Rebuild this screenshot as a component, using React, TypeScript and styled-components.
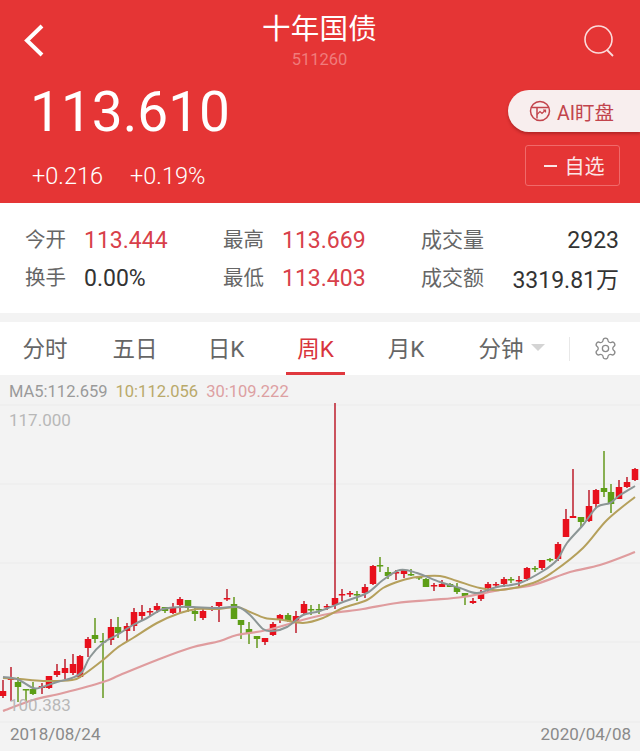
import React from "react";
import styled, { createGlobalStyle } from "styled-components";
import { Settings } from "lucide-react";

const GlobalStyle = createGlobalStyle`
  html, body {
    margin: 0;
    padding: 0;
    background: #f3f3f3;
  }
  * {
    box-sizing: border-box;
  }
`;

const FONT = `Roboto, "Noto Sans CJK SC", sans-serif`;

const Page = styled.div`
  width: 640px;
  height: 751px;
  overflow: hidden;
  display: flex;
  flex-direction: column;
  font-family: ${FONT};
  background: #f3f3f3;
`;

const Header = styled.header`
  height: 203px;
  background: #e53535;
  color: #fff;
  display: flex;
  flex-direction: column;
`;

const NavRow = styled.div`
  height: 80px;
  display: flex;
  align-items: flex-start;
  justify-content: space-between;
  padding: 24px 23px 0 22px;
`;

const TitleBlock = styled.div`
  display: flex;
  flex-direction: column;
  align-items: center;
  margin-top: -13px;
  margin-left: 12px;
`;

const Title = styled.div`
  font-size: 28.5px;
  line-height: 38px;
  letter-spacing: 0.3px;
`;

const Code = styled.div`
  font-size: 16.5px;
  line-height: 20px;
  color: #f07c7c;
  margin-top: 1px;
`;

const QuoteRow = styled.div`
  flex: 1;
  display: flex;
  justify-content: space-between;
`;

const QuoteLeft = styled.div`
  padding: 2px 0 0 30px;
`;

const Price = styled.div`
  font-size: 55px;
  line-height: 60px;
`;

const Changes = styled.div`
  display: flex;
  gap: 27px;
  margin-top: 21px;
  margin-left: 2px;
  font-size: 23.5px;
  line-height: 26px;
  font-weight: 300;
`;

const QuoteRight = styled.div`
  display: flex;
  flex-direction: column;
  align-items: flex-end;
  padding-top: 10px;
`;

const AiPill = styled.div`
  width: 132px;
  height: 42px;
  display: flex;
  align-items: center;
  gap: 6px;
  padding-left: 21px;
  background: #f8eeee;
  color: #c2444c;
  border-radius: 21px 0 0 21px;
  box-shadow: 0 2px 3px rgba(120, 20, 20, 0.45);
  font-size: 19.5px;
  white-space: nowrap;
`;

const WatchButton = styled.div`
  width: 95px;
  height: 41px;
  margin: 13px 20px 0 0;
  padding-left: 3px;
  display: flex;
  align-items: center;
  justify-content: center;
  gap: 8px;
  border: 1px solid #f06a6a;
  border-radius: 3px;
  font-size: 20px;
  color: #fbe6e6;
`;

const Minus = styled.span`
  width: 13px;
  height: 2px;
  background: #fbe6e6;
`;

const Stats = styled.section`
  height: 110px;
  background: #fff;
  display: grid;
  grid-template-columns: 198px 198px 198px;
  grid-auto-rows: 38px;
  align-content: start;
  padding: 18px 21px 0 25px;
`;

const Stat = styled.div`
  display: flex;
  align-items: center;
  white-space: nowrap;
`;

const StatLabel = styled.span`
  width: 59px;
  flex: none;
  padding-bottom: 4px;
  font-size: 20.5px;
  color: #666;
`;

const WideLabel = styled(StatLabel)`
  width: auto;
  font-size: 21px;
`;

const StatValue = styled.span<{ $tone?: "up" | "flat"; $end?: boolean }>`
  font-size: 23px;
  color: ${(p) => (p.$tone === "up" ? "#d8404a" : "#333")};
  margin-left: ${(p) => (p.$end ? "auto" : "0")};
`;

const Tabs = styled.nav`
  height: 53px;
  margin-top: 9px;
  background: #fff;
  display: flex;
  align-items: stretch;
  position: relative;
`;

const Tab = styled.div<{ $active?: boolean; $width: number }>`
  width: ${(p) => p.$width}px;
  flex: none;
  display: flex;
  align-items: center;
  justify-content: center;
  font-size: 22.5px;
  color: ${(p) => (p.$active ? "#d8343c" : "#666")};
  border-bottom: 3px solid ${(p) => (p.$active ? "#e0383e" : "transparent")};
`;

const Spacer = styled.div<{ $width: number }>`
  width: ${(p) => p.$width}px;
  flex: none;
`;

const Caret = styled.span`
  width: 0;
  height: 0;
  margin-left: 7px;
  border-left: 7px solid transparent;
  border-right: 7px solid transparent;
  border-top: 7px solid #d4d4d4;
`;

const ToolDivider = styled.div`
  width: 1px;
  height: 24px;
  flex: none;
  align-self: center;
  background: #e8e8e8;
`;

const GearSlot = styled.div`
  flex: 1;
  display: flex;
  align-items: center;
  justify-content: center;
  color: #8a8a8a;
`;

const Chart = styled.section`
  flex: 1;
  position: relative;
  background: #f3f3f3;
  display: flex;
  flex-direction: column;
`;

const ChartCanvas = styled.svg`
  position: absolute;
  inset: 0;
  width: 640px;
  height: 376px;
`;

const Legend = styled.div`
  position: relative;
  display: flex;
  gap: 8px;
  padding: 7px 0 0 9px;
  font-size: 16.5px;
  line-height: 19px;
`;

const LegendItem = styled.span<{ $color: string }>`
  color: ${(p) => p.$color};
`;

const AxisLabel = styled.div<{ $top: number }>`
  position: absolute;
  left: 9px;
  top: ${(p) => p.$top}px;
  font-size: 17px;
  line-height: 20px;
  color: #b8b8b8;
`;

const DateRow = styled.div`
  position: relative;
  margin-top: auto;
  display: flex;
  justify-content: space-between;
  padding: 0 9px 7px 10px;
  font-size: 17px;
  line-height: 20px;
  color: #8a8a8a;
`;

type Candle = [number, number, number, number, number, "r" | "g"];
type Pt = [number, number];

// x, high, body top, body bottom, low
const CANDLES: Candle[] = [
  [3, 680, 691, 696, 698, "r"], [11, 667, 678, 680, 701, "r"], [18, 677, 682, 687, 702, "g"],
  [26, 689, 689, 690, 702, "g"], [33, 682, 689, 694, 695, "g"], [42, 683, 686, 688, 694, "r"],
  [49, 676, 676, 688, 689, "r"], [57, 664, 671, 675, 677, "r"], [65, 659, 668, 673, 679, "r"],
  [73, 654, 664, 673, 675, "r"], [80, 655, 656, 677, 678, "r"], [88, 637, 639, 648, 657, "r"],
  [95, 618, 635, 639, 643, "g"], [103, 633, 641, 642, 698, "g"], [111, 619, 627, 640, 645, "r"],
  [118, 617, 627, 633, 638, "g"], [127, 623, 626, 631, 642, "r"], [134, 608, 612, 626, 631, "r"],
  [142, 605, 612, 616, 621, "r"], [150, 608, 611, 612, 617, "r"], [157, 603, 606, 610, 613, "r"],
  [165, 607, 607, 611, 613, "g"], [173, 603, 607, 613, 614, "r"], [180, 597, 599, 605, 613, "r"],
  [188, 600, 600, 608, 612, "g"], [195, 608, 611, 614, 621, "g"], [203, 608, 611, 618, 620, "r"],
  [212, 606, 607, 608, 611, "r"], [219, 602, 602, 606, 622, "r"], [227, 589, 598, 599, 601, "r"],
  [234, 597, 604, 619, 619, "g"], [241, 620, 620, 625, 639, "g"], [249, 622, 629, 633, 644, "g"],
  [257, 636, 636, 639, 648, "g"], [265, 638, 638, 642, 645, "r"], [273, 622, 624, 635, 636, "r"],
  [280, 614, 615, 619, 623, "r"], [288, 613, 615, 621, 622, "g"], [296, 611, 616, 621, 633, "r"],
  [304, 601, 604, 613, 614, "r"], [311, 605, 609, 610, 615, "g"], [319, 604, 609, 610, 614, "g"],
  [327, 604, 606, 607, 610, "r"], [335, 403, 598, 605, 609, "r"], [342, 589, 594, 595, 601, "r"],
  [350, 591, 593, 594, 597, "r"], [357, 591, 594, 595, 601, "g"], [365, 584, 587, 593, 598, "r"],
  [373, 565, 566, 584, 585, "r"], [380, 557, 565, 566, 572, "g"], [388, 567, 572, 576, 579, "g"],
  [396, 570, 572, 573, 580, "r"], [404, 569, 570, 574, 578, "r"], [411, 569, 574, 575, 576, "g"],
  [419, 576, 577, 578, 580, "g"], [426, 578, 579, 587, 587, "g"], [434, 583, 585, 586, 591, "r"],
  [442, 580, 584, 587, 587, "r"], [450, 583, 584, 587, 587, "g"], [457, 583, 587, 592, 594, "g"],
  [465, 593, 593, 597, 605, "g"], [473, 598, 601, 603, 604, "r"], [481, 590, 594, 599, 601, "r"],
  [488, 582, 584, 588, 592, "r"], [496, 582, 584, 585, 588, "r"], [504, 577, 579, 584, 587, "r"],
  [511, 577, 579, 580, 583, "g"], [519, 576, 580, 581, 587, "r"], [527, 567, 568, 579, 581, "r"],
  [535, 566, 568, 569, 572, "g"], [542, 560, 560, 568, 570, "r"], [550, 558, 559, 560, 562, "g"],
  [558, 542, 544, 559, 561, "r"], [566, 509, 519, 537, 537, "r"], [573, 469, 516, 518, 518, "r"],
  [581, 517, 517, 522, 527, "g"], [589, 490, 506, 521, 522, "r"], [596, 489, 490, 504, 508, "r"],
  [604, 451, 488, 492, 497, "g"], [611, 484, 492, 504, 513, "g"], [619, 480, 487, 499, 499, "r"],
  [627, 477, 482, 487, 488, "r"], [635, 468, 469, 480, 481, "r"],
];

const MA5: Pt[] = [
  [3, 677], [17, 679], [33, 688], [42, 687], [57, 682], [72, 678], [82, 672], [90, 657], [103, 643],
  [117, 635], [133, 625], [147, 618], [163, 609], [180, 607], [193, 607], [219, 608], [238, 607],
  [250, 615], [263, 629], [273, 631], [287, 627], [303, 615], [320, 611], [343, 602], [367, 593],
  [383, 580], [400, 570], [417, 573], [440, 582], [460, 588], [477, 593], [497, 587], [520, 583],
  [543, 571], [557, 560], [567, 543], [583, 525], [597, 507], [610, 503], [620, 495], [635, 486],
];

const MA10: Pt[] = [
  [3, 678], [20, 679], [43, 681], [72, 680], [83, 675], [103, 660], [117, 648], [133, 638],
  [157, 623], [180, 613], [197, 609], [219, 609], [237, 607], [250, 612], [265, 618], [283, 620],
  [303, 623], [323, 618], [343, 608], [367, 600], [383, 588], [400, 581], [417, 577], [440, 576],
  [457, 581], [480, 588], [500, 590], [533, 583], [553, 572], [583, 548], [607, 520], [635, 497],
];

const MA30: Pt[] = [
  [3, 711], [33, 700], [63, 693], [103, 682], [120, 675], [157, 660], [190, 648], [220, 641],
  [237, 635], [267, 630], [310, 618], [333, 613], [363, 609], [397, 603], [430, 600], [463, 597],
  [500, 590], [533, 585], [570, 572], [600, 565], [635, 552],
];

const GRID_Y = [405, 484, 563, 642, 722];

const smooth = (pts: Pt[]) => {
  let d = `M${pts[0][0]} ${pts[0][1]}`;
  for (let i = 0; i < pts.length - 1; i++) {
    const p0 = pts[Math.max(i - 1, 0)];
    const p1 = pts[i];
    const p2 = pts[i + 1];
    const p3 = pts[Math.min(i + 2, pts.length - 1)];
    const c1x = p1[0] + (p2[0] - p0[0]) / 6;
    const c1y = p1[1] + (p2[1] - p0[1]) / 6;
    const c2x = p2[0] - (p3[0] - p1[0]) / 6;
    const c2y = p2[1] - (p3[1] - p1[1]) / 6;
    d += ` C${c1x.toFixed(1)} ${c1y.toFixed(1)} ${c2x.toFixed(1)} ${c2y.toFixed(1)} ${p2[0]} ${p2[1]}`;
  }
  return d;
};

const COLORS = { r: "#e8101c", g: "#5d9e16" };
const WICKS = { r: "#c02a38", g: "#6d9e2a" };

function KChart() {
  return (
    <ChartCanvas viewBox="0 375 640 376">
      {GRID_Y.map((y) => (
        <line key={y} x1="0" x2="640" y1={y} y2={y} stroke="#ebebeb" strokeWidth="1" />
      ))}
      {CANDLES.map(([x, hi, top, bot, lo, c]) => (
        <g key={x}>
          <line x1={x} x2={x} y1={hi} y2={lo} stroke={WICKS[c]} strokeWidth="1.6" />
          <rect x={x - 3.25} y={top} width="6.5" height={Math.max(bot - top, 1.5)} fill={COLORS[c]} />
        </g>
      ))}
      <path d={smooth(MA30)} fill="none" stroke="#df9c9e" strokeWidth="2.2" />
      <path d={smooth(MA10)} fill="none" stroke="#b5a05c" strokeWidth="2" />
      <path d={smooth(MA5)} fill="none" stroke="#8c9696" strokeWidth="2" />
    </ChartCanvas>
  );
}

function BackIcon() {
  return (
    <svg width="22" height="34" viewBox="0 0 22 34">
      <polyline points="20,2 5,16.5 20,31" fill="none" stroke="#fff" strokeWidth="4" />
    </svg>
  );
}

function SearchIcon() {
  return (
    <svg width="34" height="34" viewBox="0 0 34 34">
      <circle cx="15.5" cy="15.5" r="13.5" fill="none" stroke="#fbdcdc" strokeWidth="1.6" />
      <line x1="24" y1="26" x2="30" y2="32" stroke="#fbdcdc" strokeWidth="1.8" />
    </svg>
  );
}

function AiIcon() {
  return (
    <svg width="22" height="22" viewBox="0 0 22 22" fill="none" stroke="#c2444c" strokeWidth="1.5">
      <circle cx="11" cy="11" r="9.5" />
      <path d="M2 7.5h18M8 7.5v11" />
      <path d="M8 14.5l3-3 2 2 3.5-3.5M14 10h2.5v2.5" strokeWidth="1.2" />
    </svg>
  );
}

export default function App() {
  return (
    <Page>
      <GlobalStyle />
      <Header>
        <NavRow>
          <BackIcon />
          <TitleBlock>
            <Title>十年国债</Title>
            <Code>511260</Code>
          </TitleBlock>
          <SearchIcon />
        </NavRow>
        <QuoteRow>
          <QuoteLeft>
            <Price>113.610</Price>
            <Changes>
              <span>+0.216</span>
              <span>+0.19%</span>
            </Changes>
          </QuoteLeft>
          <QuoteRight>
            <AiPill>
              <AiIcon />
              AI盯盘
            </AiPill>
            <WatchButton>
              <Minus />
              自选
            </WatchButton>
          </QuoteRight>
        </QuoteRow>
      </Header>

      <Stats>
        <Stat>
          <StatLabel>今开</StatLabel>
          <StatValue $tone="up">113.444</StatValue>
        </Stat>
        <Stat>
          <StatLabel>最高</StatLabel>
          <StatValue $tone="up">113.669</StatValue>
        </Stat>
        <Stat>
          <WideLabel>成交量</WideLabel>
          <StatValue $end>2923</StatValue>
        </Stat>
        <Stat>
          <StatLabel>换手</StatLabel>
          <StatValue>0.00%</StatValue>
        </Stat>
        <Stat>
          <StatLabel>最低</StatLabel>
          <StatValue $tone="up">113.403</StatValue>
        </Stat>
        <Stat>
          <WideLabel>成交额</WideLabel>
          <StatValue $end>3319.81万</StatValue>
        </Stat>
      </Stats>

      <Tabs>
        <Tab $width={90}>分时</Tab>
        <Tab $width={90}>五日</Tab>
        <Tab $width={92}>日K</Tab>
        <Spacer $width={14} />
        <Tab $width={59} $active>周K</Tab>
        <Spacer $width={31} />
        <Tab $width={60}>月K</Tab>
        <Spacer $width={18} />
        <Tab $width={115}>
          分钟
          <Caret />
        </Tab>
        <ToolDivider />
        <GearSlot>
          <Settings size={25} strokeWidth={1.25} />
        </GearSlot>
      </Tabs>

      <Chart>
        <KChart />
        <Legend>
          <LegendItem $color="#9a9a9a">MA5:112.659</LegendItem>
          <LegendItem $color="#b9a96a">10:112.056</LegendItem>
          <LegendItem $color="#dda0a2">30:109.222</LegendItem>
        </Legend>
        <AxisLabel $top={35}>117.000</AxisLabel>
        <AxisLabel $top={320}>100.383</AxisLabel>
        <DateRow>
          <span>2018/08/24</span>
          <span>2020/04/08</span>
        </DateRow>
      </Chart>
    </Page>
  );
}
